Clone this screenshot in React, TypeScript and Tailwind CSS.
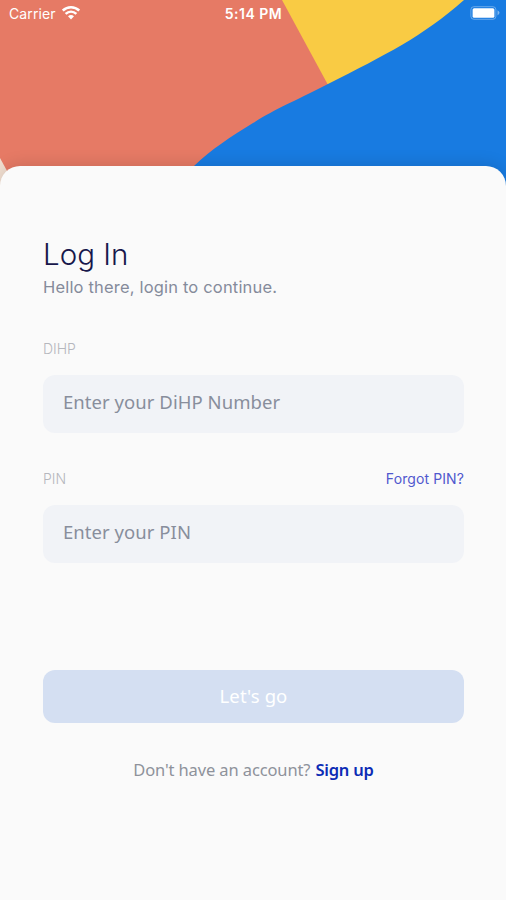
import React, { useState } from 'react';

interface FieldProps {
  id: string;
  label: string;
  placeholder: string;
  type?: string;
  action?: React.ReactNode;
}

const HeroArtwork: React.FC = () => (
  <svg viewBox="0 0 506 200" className="absolute inset-x-0 top-0 h-[200px] w-full" aria-hidden="true">
    <rect width="506" height="200" fill="#e67a65" />
    <path d="M282 0H480V84H327.500Z" fill="#f9cb44" />
    <path
      d="M464 0C422 37 387 54 327 84.500C291 103 277 108 253 123C230 137 212 149 194 166V200H506V0Z"
      fill="#187be1"
    />
    <path d="M0 158L12 180V200H0Z" fill="#f1ded0" />
  </svg>
);

const WifiIcon: React.FC = () => (
  <svg width="18" height="14" viewBox="0 0 18 14" fill="none" stroke="white" strokeWidth="2.500" aria-hidden="true">
    <path d="M.8 4.500C5.400.200 12.600.200 17.200 4.500" />
    <path d="M3.600 7.900C6.800 5 11.200 5 14.400 7.900" />
    <path d="M6 10.300Q9 7.700 12 10.300L9 13.500Z" fill="white" stroke="none" />
  </svg>
);

const BatteryIcon: React.FC = () => (
  <svg width="31" height="14" viewBox="0 0 31 14" aria-hidden="true">
    <rect x=".9" y=".7" width="25" height="12.600" rx="3" fill="none" stroke="white" strokeOpacity=".35" />
    <rect x="2.600" y="2.200" width="21.800" height="9.600" rx="1.500" fill="white" />
    <path d="M27.500 4.200Q31.500 6.800 27.500 9.400Z" fill="white" fillOpacity=".45" />
  </svg>
);

const StatusBar: React.FC = () => (
  <div className="relative grid h-[26px] grid-cols-3 items-center pl-[9px] pr-[5px] font-['Inter'] text-white">
    <div className="flex items-center gap-[6px]">
      <span className="text-[14px] tracking-[0.1px]">Carrier</span>
      <WifiIcon />
    </div>
    <span className="-ml-[3px] whitespace-nowrap text-center text-[14px] font-semibold tracking-[0.5px]">5:14 PM</span>
    <div className="flex justify-end">
      <BatteryIcon />
    </div>
  </div>
);

const Field: React.FC<FieldProps> = ({ id, label, placeholder, type = 'text', action }) => {
  const [value, setValue] = useState('');

  return (
    <div>
      <div className="flex h-5 items-center justify-between pb-0.5 font-['Inter'] text-[14px]">
        <label htmlFor={id} className="font-light text-[#b5b7bd]">
          {label}
        </label>
        {action}
      </div>
      <input
        id={id}
        type={type}
        value={value}
        onChange={(e) => setValue(e.target.value)}
        placeholder={placeholder}
        className="mt-4 block h-[58px] w-full rounded-xl bg-[#f1f3f7] px-5 pb-1.5 font-['Noto_Sans'] text-[18.5px] tracking-[0.05px] outline-none placeholder:text-[#888e9c]"
      />
    </div>
  );
};

const App: React.FC = () => {
  return (
    <div className="relative flex h-[900px] w-full flex-col overflow-hidden">
      <HeroArtwork />
      <StatusBar />
      <main className="relative mt-[140px] flex-1 rounded-t-[20px] bg-[#fafafa] pl-[43px] pr-[42px] pt-[69px] shadow-[0_-2px_16px_rgba(0,0,0,0.12)]">
        <h1 className="h-[39px] font-['Inter'] text-[29.5px] font-light leading-[38px] text-[#17174b]">Log In</h1>
        <p className="h-6 whitespace-nowrap font-['Inter'] text-[16.5px] leading-[26px] tracking-[0.18px] text-[#858b9b]">
          Hello there, login to continue.
        </p>

        <form onSubmit={(e) => e.preventDefault()}>
          <div className="mt-[41px] flex flex-col gap-9">
            <Field id="dihp" label="DIHP" placeholder="Enter your DiHP Number" />
            <Field
              id="pin"
              label="PIN"
              type="password"
              placeholder="Enter your PIN"
              action={
                <a href="#forgot" className="tracking-[0.1px] text-[#5058ce]">
                  Forgot PIN?
                </a>
              }
            />
          </div>
          <button
            type="submit"
            className="mt-[107px] h-[53px] w-full rounded-xl bg-[#d4dff2] pb-0.5 font-['Noto_Sans'] text-[18.5px] tracking-[0.1px] text-white"
          >
            Let's go
          </button>
        </form>

        <p className="mt-[35px] flex justify-center gap-[5px] whitespace-nowrap font-['Noto_Sans'] text-[16.5px] leading-6 text-[#8e929b]">
          <span className="tracking-[-0.12px]">Don't have an account?</span>
          <a href="#signup" className="font-semibold tracking-[-0.2px] text-[#0c2cb5]">
            Sign up
          </a>
        </p>
      </main>
    </div>
  );
};

export default App;
